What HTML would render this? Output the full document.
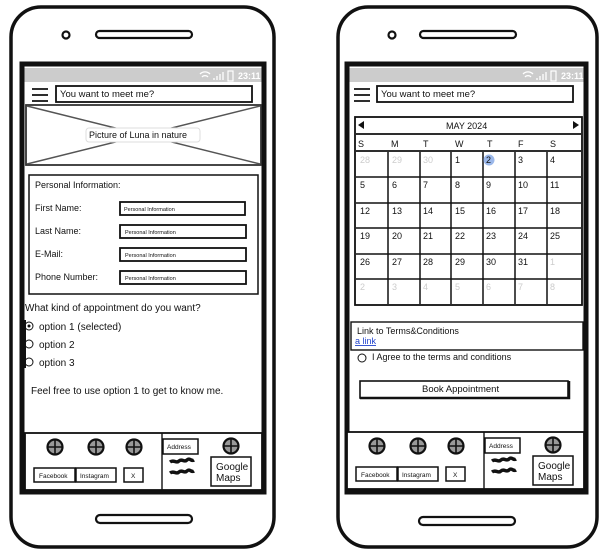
<!DOCTYPE html>
<html><head><meta charset="utf-8"><style>
html,body{margin:0;padding:0;background:#fff;width:609px;height:556px;overflow:hidden}
svg{display:block}
text{font-family:"Liberation Sans",sans-serif;fill:#111}
</style></head><body>
<svg width="609" height="556" viewBox="0 0 609 556" xmlns="http://www.w3.org/2000/svg">
<defs>
<g id="foot">
  <rect x="0" y="0" width="237" height="57" fill="#fff" stroke="#111" stroke-width="1.8"/>
  <line x1="137" y1="0" x2="137" y2="57" stroke="#111" stroke-width="1.4"/>
  <g stroke="#111" stroke-width="2.2" fill="#999">
    <circle cx="30" cy="14" r="7.5"/><circle cx="71" cy="14" r="7.5"/><circle cx="109" cy="14" r="7.5"/><circle cx="206" cy="13" r="7.5"/>
  </g>
  <g stroke="#111" stroke-width="1.6">
    <path d="M22.5 14h15M30 6.5v15M63.5 14h15M71 6.5v15M101.5 14h15M109 6.5v15M198.5 13h15M206 5.5v15"/>
  </g>
  <g fill="#fff" stroke="#111" stroke-width="1.5">
    <rect x="9" y="35" width="41" height="14"/><rect x="51" y="35" width="40" height="14"/><rect x="99" y="35" width="19" height="14"/>
    <rect x="138" y="6" width="35" height="15"/><rect x="186" y="24" width="40" height="29"/>
  </g>
  <text x="14" y="45" font-size="6.5">Facebook</text>
  <text x="55" y="45" font-size="6.5">Instagram</text>
  <text x="106" y="45" font-size="6.5">X</text>
  <text x="142" y="16" font-size="6.5">Address</text>
  <path d="M145 29c4-3 6 2 9-1s5 2 8-1 4 2 7 0M145 40c4-3 6 2 9-1s5 2 8-1 4 2 7 0" stroke="#111" stroke-width="3.5" fill="none"/>
  <text x="191" y="37" font-size="10">Google</text>
  <text x="191" y="48" font-size="10">Maps</text>
</g>
</defs>

<!-- LEFT PHONE -->
<rect x="11" y="7" width="263" height="540" rx="30" fill="#fff" stroke="#111" stroke-width="3.5"/>
<circle cx="66" cy="35" r="3.5" fill="#fff" stroke="#111" stroke-width="2.2"/>
<rect x="96" y="31" width="96" height="7" rx="3.5" fill="#fff" stroke="#111" stroke-width="2.2"/>
<rect x="96" y="515" width="96" height="8" rx="4" fill="#fff" stroke="#111" stroke-width="2.2"/>
<rect x="22" y="64" width="242" height="428" fill="#fff" stroke="#111" stroke-width="5"/>
<rect x="24.5" y="68" width="237" height="14" fill="#ccc"/>
<text x="238" y="79" font-size="9" style="fill:#fff;font-weight:bold">23:11</text>
<rect x="228" y="71" width="5" height="10" fill="none" stroke="#fff" stroke-width="1.2"/>
<path d="M200 74a7 7 0 0 1 10 0M202 77a4 4 0 0 1 6 0M214 80v-2M217 80v-4M220 80v-6M223 80v-8" stroke="#fff" stroke-width="1.3" fill="none"/>
<path d="M32 89h16M32 95h16M32 101h16" stroke="#111" stroke-width="1.8"/>
<rect x="56" y="86" width="196" height="16" fill="#fff" stroke="#111" stroke-width="1.8"/>
<text x="60" y="97" font-size="9.5">You want to meet me?</text>
<rect x="26" y="105" width="235" height="60" fill="#fff" stroke="#333" stroke-width="1.8"/>
<path d="M27 106L260 164M260 106L27 164" stroke="#555" stroke-width="1.5"/>
<rect x="86" y="128" width="114" height="14" rx="3" fill="#fff" stroke="#ddd"/>
<text x="89" y="138" font-size="9">Picture of Luna in nature</text>
<rect x="29" y="175" width="229" height="119" fill="#fff" stroke="#111" stroke-width="1.5"/>
<text x="35" y="188" font-size="9">Personal Information:</text>
<text x="35" y="211" font-size="9">First Name:</text>
<text x="35" y="234" font-size="9">Last Name:</text>
<text x="35" y="257" font-size="9">E-Mail:</text>
<text x="35" y="280" font-size="9">Phone Number:</text>
<g fill="#fff" stroke="#111" stroke-width="1.8">
<rect x="120" y="202" width="125" height="13"/><rect x="120" y="225" width="126" height="13"/><rect x="120" y="248" width="126" height="13"/><rect x="120" y="271" width="126" height="13"/>
</g>
<g font-size="5.5"><text x="124" y="211">Personal Information</text><text x="125" y="234">Personal Information</text><text x="125" y="257">Personal Information</text><text x="125" y="280">Personal Information</text></g>
<text x="25" y="311" font-size="10">What kind of appointment do you want?</text>
<circle cx="29" cy="326" r="4" fill="#fff" stroke="#111"/><circle cx="29" cy="326" r="1.5" fill="#111"/>
<circle cx="29" cy="344" r="4" fill="#fff" stroke="#111"/>
<circle cx="29" cy="362" r="4" fill="#fff" stroke="#111"/>
<rect x="24" y="320" width="2" height="48" fill="#111"/>
<text x="39" y="330" font-size="10">option 1 (selected)</text>
<text x="39" y="348" font-size="10">option 2</text>
<text x="39" y="366" font-size="10">option 3</text>
<text x="31" y="394" font-size="10">Feel free to use option 1 to get to know me.</text>
<use href="#foot" x="25" y="433"/>

<!-- RIGHT PHONE -->
<rect x="338" y="7" width="259" height="540" rx="30" fill="#fff" stroke="#111" stroke-width="3.5"/>
<circle cx="392" cy="35" r="3.5" fill="#fff" stroke="#111" stroke-width="2.2"/>
<rect x="420" y="31" width="96" height="7" rx="3.5" fill="#fff" stroke="#111" stroke-width="2.2"/>
<rect x="419" y="517" width="96" height="8" rx="4" fill="#fff" stroke="#111" stroke-width="2.2"/>
<rect x="347" y="64" width="239" height="428" fill="#fff" stroke="#111" stroke-width="5"/>
<rect x="349.5" y="68" width="234" height="14" fill="#ccc"/>
<text x="561" y="79" font-size="9" style="fill:#fff;font-weight:bold">23:11</text>
<rect x="551" y="71" width="5" height="10" fill="none" stroke="#fff" stroke-width="1.2"/>
<path d="M523 74a7 7 0 0 1 10 0M525 77a4 4 0 0 1 6 0M537 80v-2M540 80v-4M543 80v-6M546 80v-8" stroke="#fff" stroke-width="1.3" fill="none"/>
<path d="M354 89h16M354 95h16M354 101h16" stroke="#111" stroke-width="1.8"/>
<rect x="377" y="86" width="196" height="16" fill="#fff" stroke="#111" stroke-width="1.8"/>
<text x="381" y="97" font-size="9.5">You want to meet me?</text>
<rect x="355" y="117" width="227" height="188" fill="#fff" stroke="#111" stroke-width="1.8"/>
<line x1="356" y1="134" x2="581" y2="134" stroke="#111" stroke-width="1.8"/>
<line x1="356" y1="151" x2="581" y2="151" stroke="#111" stroke-width="1.8"/>
<path d="M358 125l6-4v8zM579 125l-6-4v8z" fill="#111"/>
<text x="446" y="129" font-size="9">MAY 2024</text>
<g font-size="9"><text x="358" y="147">S</text><text x="391" y="147">M</text><text x="423" y="147">T</text><text x="455" y="147">W</text><text x="487" y="147">T</text><text x="518" y="147">F</text><text x="550" y="147">S</text></g>
<g stroke="#111" stroke-width="1.5">
<path d="M388 152v152M420 152v152M451 152v152M483 152v152M515 152v152M547 152v152"/>
<path d="M356 177h225M356 203h225M356 228h225M356 254h225M356 279h225"/>
</g>
<circle cx="489" cy="160" r="5.5" fill="#9bb8ea"/>
<g font-size="9">
<text x="360" y="163" style="fill:#ccc">28</text><text x="392" y="163" style="fill:#ccc">29</text><text x="423" y="163" style="fill:#ccc">30</text><text x="455" y="163">1</text><text x="486" y="163">2</text><text x="518" y="163">3</text><text x="550" y="163">4</text>
<text x="360" y="188">5</text><text x="392" y="188">6</text><text x="423" y="188">7</text><text x="455" y="188">8</text><text x="486" y="188">9</text><text x="518" y="188">10</text><text x="550" y="188">11</text>
<text x="360" y="214">12</text><text x="392" y="214">13</text><text x="423" y="214">14</text><text x="455" y="214">15</text><text x="486" y="214">16</text><text x="518" y="214">17</text><text x="550" y="214">18</text>
<text x="360" y="239">19</text><text x="392" y="239">20</text><text x="423" y="239">21</text><text x="455" y="239">22</text><text x="486" y="239">23</text><text x="518" y="239">24</text><text x="550" y="239">25</text>
<text x="360" y="265">26</text><text x="392" y="265">27</text><text x="423" y="265">28</text><text x="455" y="265">29</text><text x="486" y="265">30</text><text x="518" y="265">31</text><text x="550" y="265" style="fill:#ccc">1</text>
<g style="fill:#ccc"><text x="360" y="290" style="fill:#ccc">2</text><text x="392" y="290" style="fill:#ccc">3</text><text x="423" y="290" style="fill:#ccc">4</text><text x="455" y="290" style="fill:#ccc">5</text><text x="486" y="290" style="fill:#ccc">6</text><text x="518" y="290" style="fill:#ccc">7</text><text x="550" y="290" style="fill:#ccc">8</text></g>
</g>
<rect x="351" y="322" width="232" height="28" fill="#fff" stroke="#111" stroke-width="1.4"/>
<text x="357" y="334" font-size="9">Link to Terms&amp;Conditions</text>
<text x="355" y="344" font-size="9" style="fill:#2244cc" text-decoration="underline">a link</text>
<circle cx="362" cy="358" r="4" fill="#fff" stroke="#111"/>
<text x="372" y="360" font-size="9">I Agree to the terms and conditions</text>
<rect x="360" y="381" width="208" height="17" fill="#fff" stroke="#111" stroke-width="1.6"/>
<path d="M360 398h209v-17" stroke="#111" stroke-width="2.5" fill="none"/>
<text x="422" y="392" font-size="9.5">Book Appointment</text>
<use href="#foot" x="347" y="432"/>
</svg>
</body></html>
